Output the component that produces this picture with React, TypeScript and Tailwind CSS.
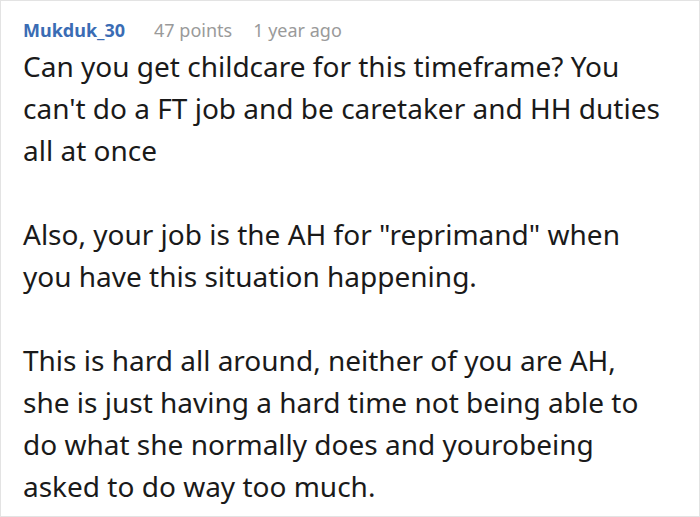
export default function App() {
  const paragraphs = [
    "Can you get childcare for this timeframe? You can't do a FT job and be caretaker and HH duties all at once",
    'Also, your job is the AH for "reprimand" when you have this situation happening.',
    'This is hard all around, neither of you are AH, she is just having a hard time not being able to do what she normally does and yourobeing asked to do way too much.',
  ]

  return (
    <div className="w-[700px] h-[517px] bg-white border border-[#e3e3e3] overflow-hidden font-['Noto_Sans',sans-serif]">
      <div className="pl-[22px] pr-[30px] pt-[17px]">
        <div className="flex items-center h-6 text-[18px] leading-6">
          <span className="font-bold text-[#3a6cb4]">Mukduk_30</span>
          <span className="ml-[29px] text-[#9a9a9a]">47 points</span>
          <span className="ml-[21px] text-[#9a9a9a]">1 year ago</span>
        </div>
        <div className="mt-[3px] text-[28px] leading-[42px] text-[#1a1a1a]">
          {paragraphs.map((p, i) => (
            <p key={i} className={i > 0 ? 'mt-[42px]' : ''}>
              {p}
            </p>
          ))}
        </div>
      </div>
    </div>
  )
}
